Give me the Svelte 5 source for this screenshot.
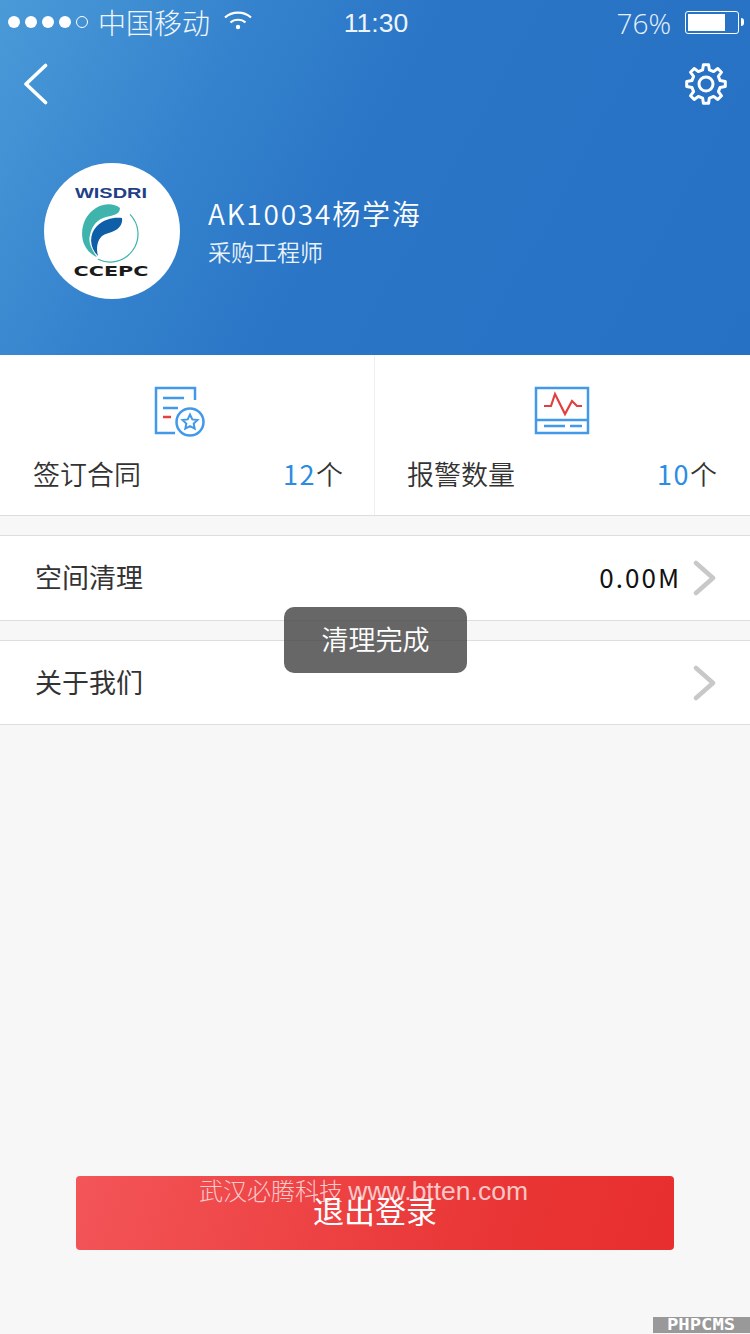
<script lang="ts">
  const stats = [
    { label: "签订合同", value: "12", icon: "contract" },
    { label: "报警数量", value: "10", icon: "alarm" }
  ];
  const rows = [
    { label: "空间清理", value: "0.00M" },
    { label: "关于我们", value: "" }
  ];

  // 8 toothed gear, same shape as the settings icon
  function gearPath(cx: number, cy: number, outer: number, inner: number) {
    const teeth = 8;
    const step = (Math.PI * 2) / teeth;
    let d = "";
    for (let i = 0; i < teeth; i++) {
      const a = i * step - Math.PI / 2;
      const pts = [
        [inner, a - step * 0.3],
        [outer, a - step * 0.17],
        [outer, a + step * 0.17],
        [inner, a + step * 0.3]
      ];
      for (const [r, t] of pts) {
        const x = (cx + r * Math.cos(t)).toFixed(1);
        const y = (cy + r * Math.sin(t)).toFixed(1);
        d += (d ? "L" : "M") + x + " " + y;
      }
    }
    return d + "Z";
  }
</script>

<div class="page">
  <header class="hero">
    <div class="status">
      <div class="status-left">
        <span class="signal">
          <i></i><i></i><i></i><i></i><i class="off"></i>
        </span>
        <span class="carrier">中国移动</span>
        <svg class="wifi" width="30" height="22" viewBox="0 0 30 22" fill="none" stroke="#fff" stroke-width="2.2">
          <path d="M2 8.500C9 2 21 2 28 8.500" />
          <path d="M7.500 13.500C11.500 9.800 18.500 9.800 22.500 13.500" />
          <circle cx="15" cy="18" r="2.200" fill="#fff" stroke="none" />
        </svg>
      </div>
      <span class="clock">11:30</span>
      <div class="status-right">
        <span class="percent">76%</span>
        <span class="battery"><span class="battery-fill"></span></span>
        <span class="battery-tip"></span>
      </div>
    </div>

    <div class="nav">
      <svg width="26" height="42" viewBox="0 0 26 42" fill="none" stroke="#fff" stroke-width="3.6" stroke-linecap="round" stroke-linejoin="round">
        <path d="M22.500 2.500L3 21L22.500 39.500" />
      </svg>
      <svg width="44" height="44" viewBox="0 0 44 44" fill="none" stroke="#fff" stroke-width="3" stroke-linejoin="round">
        <path d={gearPath(22, 22, 19.5, 14.5)} />
        <circle cx="22" cy="22" r="7" />
      </svg>
    </div>

    <div class="profile">
      <div class="avatar">
        <svg width="136" height="136" viewBox="0 0 136 136">
          <text class="logo-top" x="67" y="35" text-anchor="middle" textLength="72" lengthAdjust="spacingAndGlyphs">WISDRI</text>
          <path d="M86 51.400A28 28 0 0 1 54 96.300" fill="none" stroke="#3db5ad" stroke-width="1.200" />
          <path d="M76 45C70 40 60 40 52 45C40 52 35 68 40 81C43 88 48 92 53 94C47 86 44 78 46 72C48 62 54 56 62 54C68 52.500 76 52 76 45Z" fill="#3eb4ac" />
          <path d="M78 55C70 54 60 56 53 63C45 71 45 84 54 93C52 85 53 78 58 73C62 70 66 70 70 68C75 66 79 61 78 55Z" fill="#0e5fa8" />
          <text class="logo-bottom" x="67" y="113" text-anchor="middle" textLength="75" lengthAdjust="spacingAndGlyphs">CCEPC</text>
        </svg>
      </div>
      <div class="who">
        <div class="name">AK10034杨学海</div>
        <div class="role">采购工程师</div>
      </div>
    </div>
  </header>

  <section class="stats">
    {#each stats as stat}
      <div class="stat">
        <div class="stat-icon {stat.icon}">
          {#if stat.icon === "contract"}
            <svg width="52" height="52" viewBox="0 0 52 52" fill="none" stroke="#4299ea" stroke-width="2.500">
              <path d="M21 47H2V2H41V14" />
              <path d="M9 12H30M9 22H24" />
              <path d="M9 31H17" stroke="#e8403f" />
              <circle cx="36" cy="36" r="13.500" />
              <path d="M36 28.500L38.300 33.400L43.500 34L39.700 37.500L40.700 42.700L36 40.100L31.300 42.700L32.300 37.500L28.500 34L33.700 33.400Z" stroke-width="2" />
            </svg>
          {:else}
            <svg width="56" height="50" viewBox="0 0 56 50" fill="none" stroke="#4299ea" stroke-width="2.500">
              <path d="M2 2H54V47H2ZM2 34H54" />
              <path d="M10 20H17L21 8L31 28L38 15L43 20H48" stroke="#e2403f" stroke-width="2.200" />
              <path d="M10 40H31M36 40H48" />
            </svg>
          {/if}
        </div>
        <div class="stat-line">
          <span class="stat-label">{stat.label}</span>
          <span class="stat-count"><b>{stat.value}</b>个</span>
        </div>
      </div>
    {/each}
  </section>

  <section class="list">
    {#each rows as row}
      <div class="row">
        <span class="row-label">{row.label}</span>
        <span class="row-value">{row.value}</span>
        <svg class="chevron" width="24" height="36" viewBox="0 0 24 36" fill="none" stroke="#c8c8c8" stroke-width="4.500" stroke-linecap="round" stroke-linejoin="round">
          <path d="M3 3L20 18L3 33" />
        </svg>
      </div>
    {/each}
  </section>

  <button class="logout">退出登录</button>

  <div class="toast">清理完成</div>
  <div class="watermark">武汉必腾科技 <span>www.btten.com</span></div>
  <div class="phpcms"><span>PHPCMS</span></div>
</div>

<style>
  :global(body) {
    margin: 0;
    background: #f7f7f7;
  }

  .page {
    position: relative;
    height: 1334px;
    overflow: hidden;
    background: #f7f7f7;
    font-family: "Noto Sans CJK SC", "Noto Sans", sans-serif;
    color: #333;
  }

  .hero {
    height: 355px;
    box-sizing: border-box;
    background: linear-gradient(118deg, #4a9ad8 0%, #3482cd 28%, #2a75c6 48%, #2771c4 100%);
    color: #fff;
  }

  .status {
    display: grid;
    grid-template-columns: 1fr auto 1fr;
    align-items: center;
    height: 44px;
    padding: 0 6px 0 8px;
  }

  .status-left,
  .status-right {
    display: flex;
    align-items: center;
  }

  .status-right {
    justify-content: flex-end;
  }

  .signal {
    display: flex;
    gap: 5px;
  }

  .signal i {
    width: 12px;
    height: 12px;
    border-radius: 50%;
    background: #fff;
  }

  .signal i.off {
    box-sizing: border-box;
    background: none;
    border: 1px solid #fff;
  }

  .carrier {
    margin-left: 10px;
    font-size: 28px;
    font-weight: 300;
    line-height: 1;
    color: #f0f6fc;
  }

  .wifi {
    margin-left: 13px;
    margin-top: -5px;
  }

  .clock {
    margin-top: 2px;
    font-family: "Liberation Sans", sans-serif;
    font-size: 26.500px;
    color: #eef4fb;
  }

  .percent {
    margin-top: 2px;
    font-family: "Open Sans", "Liberation Sans", sans-serif;
    font-size: 28px;
    font-weight: 300;
    color: #e6f0fa;
  }

  .battery {
    box-sizing: border-box;
    display: block;
    width: 54px;
    height: 23px;
    margin-left: 14px;
    padding: 2px;
    border: 1.5px solid #fff;
    border-radius: 3px;
  }

  .battery-fill {
    display: block;
    width: 37px;
    height: 100%;
    background: #fff;
  }

  .battery-tip {
    width: 3px;
    height: 8px;
    margin-left: 2px;
    background: #fff;
    border-radius: 0 4px 4px 0;
  }

  .nav {
    display: flex;
    justify-content: space-between;
    align-items: center;
    height: 80px;
    padding: 0 22px 0 23px;
  }

  .profile {
    display: flex;
    align-items: center;
    gap: 28px;
    margin-top: 39px;
    padding-left: 44px;
  }

  .avatar {
    width: 136px;
    height: 136px;
    border-radius: 50%;
    background: #fff;
  }

  .avatar svg {
    display: block;
  }

  .logo-top {
    font-family: "Liberation Sans", sans-serif;
    font-size: 15px;
    font-weight: 700;
    fill: #1f3f86;
  }

  .logo-bottom {
    font-family: "DejaVu Sans", sans-serif;
    font-size: 14px;
    font-weight: 700;
    fill: #1b1b1b;
  }

  .name {
    font-size: 28px;
    font-weight: 350;
    letter-spacing: 1.800px;
    line-height: 36px;
    color: #fff;
  }

  .role {
    margin-top: 4px;
    font-size: 23px;
    font-weight: 350;
    line-height: 32px;
    color: #eaf3fb;
  }

  .stats {
    display: grid;
    grid-template-columns: 374px 376px;
    height: 161px;
    box-sizing: border-box;
    background: #fff;
    border-bottom: 1px solid #ddd;
  }

  .stat {
    padding: 31px 31px 0 33px;
  }

  .stat + .stat {
    padding: 31px 33px 0 32px;
    border-left: 1px solid #f0f0f0;
  }

  .stat-icon {
    display: flex;
    height: 52px;
    padding-left: 121px;
  }

  .stat-icon.alarm {
    padding-left: 127px;
  }

  .stat-line {
    display: flex;
    justify-content: space-between;
    align-items: center;
    margin-top: 16px;
    font-size: 27px;
    font-weight: 350;
    color: #333;
  }

  .stat-count b {
    font-weight: 400;
    letter-spacing: 1.500px;
    color: #2c8ce2;
  }

  .list {
    display: flex;
    flex-direction: column;
    gap: 19px;
    margin-top: 19px;
  }

  .row {
    display: flex;
    align-items: center;
    height: 86px;
    box-sizing: border-box;
    padding: 0 35px;
    background: #fff;
    border-top: 1px solid #ddd;
    border-bottom: 1px solid #ddd;
  }

  .row:last-child {
    height: 85px;
  }

  .row-label {
    flex: 1;
    padding-bottom: 3px;
    font-size: 27px;
    font-weight: 400;
    color: #333;
  }

  .row-value {
    padding-bottom: 3px;
    font-size: 26px;
    font-weight: 400;
    letter-spacing: 2px;
    color: #111;
  }

  .chevron {
    margin-left: 12px;
    margin-right: -2px;
  }

  .logout {
    display: block;
    width: 598px;
    height: 74px;
    margin: 451px 0 0 76px;
    padding: 0 0 8px;
    border: 0;
    border-radius: 4px;
    background: linear-gradient(108deg, #f35558 0%, #e93535 70%, #e82e2e 100%);
    font-family: "Noto Sans CJK SC", sans-serif;
    font-size: 31px;
    color: #fff;
  }

  .toast {
    position: absolute;
    left: 284px;
    top: 607px;
    width: 183px;
    height: 66px;
    border-radius: 10px;
    background: rgba(70, 70, 70, 0.82);
    font-size: 27px;
    font-weight: 350;
    line-height: 64px;
    text-align: center;
    color: #fff;
  }

  .watermark {
    position: absolute;
    left: 199px;
    top: 1173px;
    font-family: "Noto Sans CJK SC", sans-serif;
    font-size: 24px;
    font-weight: 300;
    line-height: 34px;
    white-space: nowrap;
    color: rgba(255, 255, 255, 0.72);
  }

  .watermark span {
    font-family: "Liberation Sans", sans-serif;
    font-size: 26.500px;
    font-weight: 400;
  }

  .phpcms {
    position: absolute;
    right: 0;
    bottom: 1px;
    width: 97px;
    height: 16px;
    background: #999;
    font-family: "DejaVu Sans Mono", monospace;
    font-size: 15px;
    font-weight: 700;
    line-height: 16px;
    text-align: center;
    color: #fff;
  }

  .phpcms span {
    display: inline-block;
    transform: scaleX(1.26);
  }
</style>
